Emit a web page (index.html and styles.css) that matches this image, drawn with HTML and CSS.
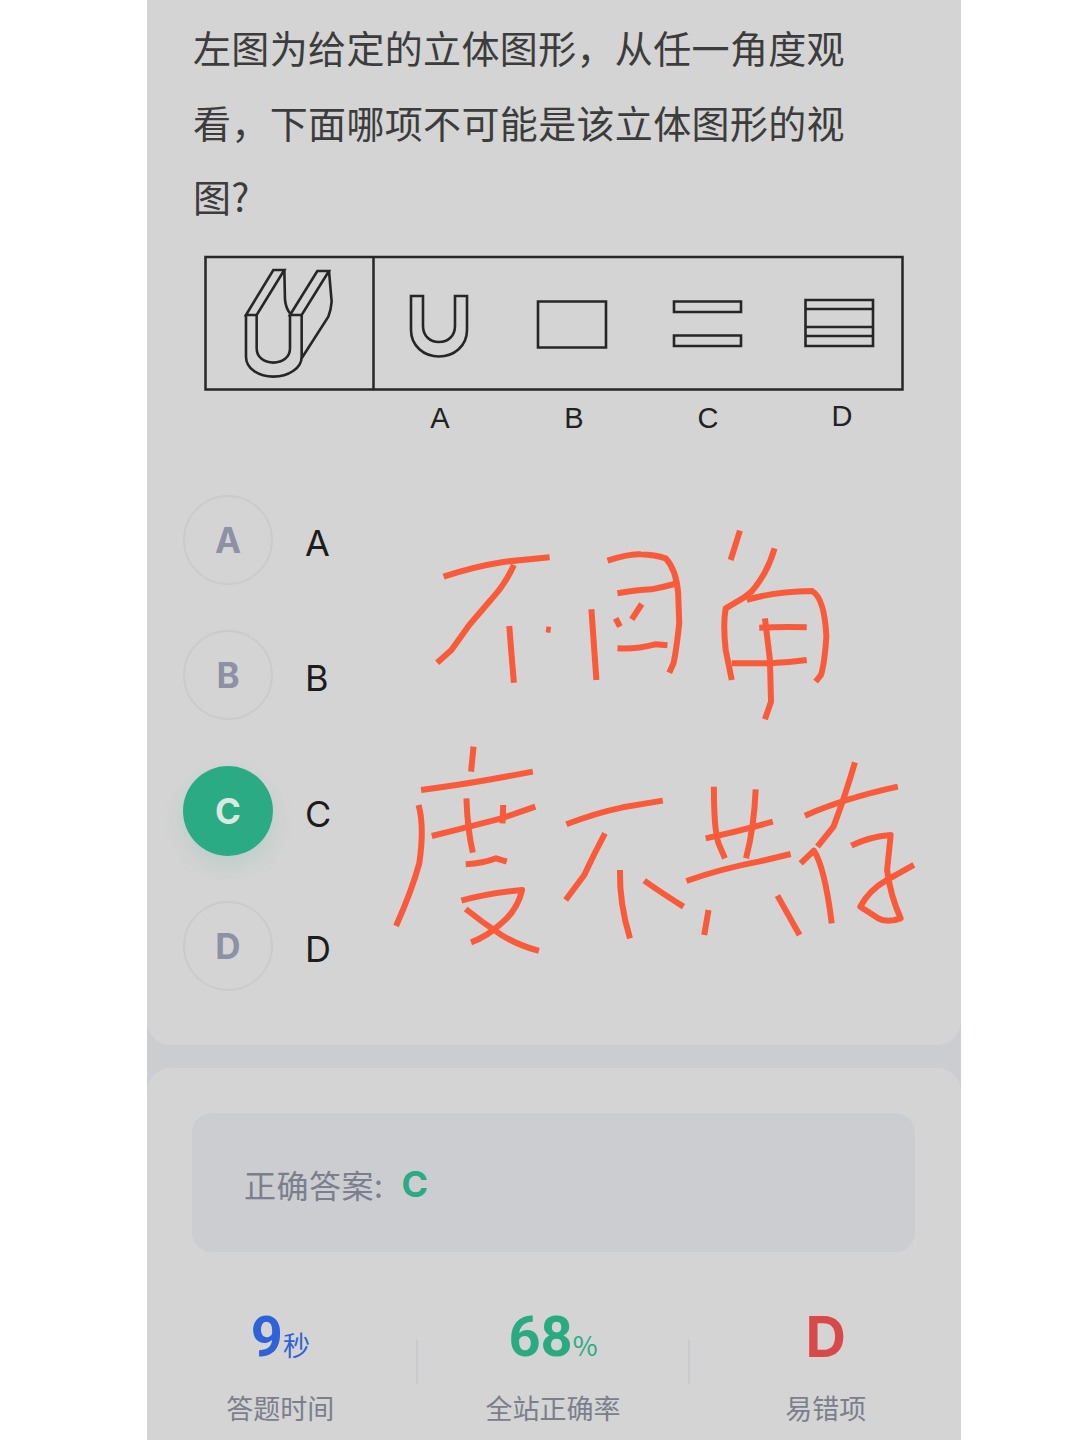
FILE: index.html
```html
<!DOCTYPE html>
<html lang="zh-CN">
<head>
    <meta charset="UTF-8">
    <meta name="viewport" content="width=device-width, initial-scale=1.0">
    <title>Question</title>
    <link rel="stylesheet" href="styles.css">
</head>
<body>
    <div class="app">
        <div class="card question-card">
            <p class="question">左图为给定的立体图形，从任一角度观看，下面哪项不可能是该立体图形的视图?</p>

            <!-- puzzle figure, coordinates match the page -->
            <svg class="figure" viewBox="190 240 730 200" width="730" height="200">
                <g class="fig-line">
                    <rect x="205.500" y="257" width="697" height="132.500"/>
                    <path d="M373.500 257V389.500"/>
                </g>
                <g class="fig-thin" transform="translate(230 260) scale(.3333)">
                    <path d="M48 165V290C48 325 85 350 130 350C175 350 215 325 215 290V165"/>
                    <path d="M80 165V265C80 292 102 308 130 308C158 308 180 292 180 265V165"/>
                    <path d="M48 165L130 30H163L80 165Z"/>
                    <path d="M180 165L262 33H297L215 165Z"/>
                    <path d="M163 30L165 120Q168 145 180 160"/>
                    <path d="M297 33L305 125Q303 150 295 170L215 295"/>
                </g>
                <g class="fig-thin">
                    <path d="M411 296V330C411 346 424 356.500 439 356.500C454 356.500 467 346 467 330V296H455V326C455 336 448 342 439 342C430 342 423 336 423 326V296Z"/>
                    <rect x="538" y="301.500" width="68" height="46"/>
                    <rect x="674" y="301.500" width="67" height="10.500"/>
                    <rect x="674" y="335.500" width="67" height="10.500"/>
                    <rect x="805.500" y="300" width="67.500" height="46"/>
                    <path d="M805.500 309H873M805.500 327H873M805.500 336H873"/>
                </g>
                <text class="fig-label" x="440" y="428">A</text>
                <text class="fig-label" x="574" y="428">B</text>
                <text class="fig-label" x="708" y="428">C</text>
                <text class="fig-label" x="842" y="426">D</text>
            </svg>

            <ul class="options">
                <li class="option"><span class="bubble">A</span><span class="option-text">A</span></li>
                <li class="option"><span class="bubble">B</span><span class="option-text">B</span></li>
                <li class="option"><span class="bubble correct">C</span><span class="option-text">C</span></li>
                <li class="option"><span class="bubble">D</span><span class="option-text">D</span></li>
            </ul>
        </div>

        <div class="card result-card">
            <div class="answer">
                <span class="answer-label">正确答案:</span>
                <span class="answer-value">C</span>
            </div>
            <div class="stats">
                <div class="stat">
                    <div class="stat-num blue">9<small>秒</small></div>
                    <div class="stat-label">答题时间</div>
                </div>
                <div class="stat-sep"></div>
                <div class="stat">
                    <div class="stat-num green">68<small>%</small></div>
                    <div class="stat-label">全站正确率</div>
                </div>
                <div class="stat-sep"></div>
                <div class="stat">
                    <div class="stat-num red">D</div>
                    <div class="stat-label">易错项</div>
                </div>
            </div>
        </div>

        <!-- freehand pen marks on top of the screenshot -->
        <svg class="ink" viewBox="380 510 560 460" width="560" height="460" role="img" aria-label="不同角度不共存">
            <g transform="translate(380 510) scale(.3571 .3333)">
                <path d="M178 200Q260 170 350 155L475 142"/>
                <path d="M375 165Q350 225 310 270L250 345L200 420L160 458"/>
                <path d="M362 348L368 430L375 518"/>
                <path d="M465 358L478 360"/>
                <path d="M592 298L606 510"/>
                <path d="M637 152Q700 130 730 133Q770 135 800 145Q830 180 835 250L838 340Q830 420 822 460L810 488"/>
                <path d="M665 250Q720 240 760 238Q790 232 825 222"/>
                <path d="M660 325L672 350"/>
                <path d="M733 282L705 328"/>
                <path d="M665 415Q720 418 770 403L805 406"/>
                <path d="M1008 62L982 150"/>
                <path d="M1105 115Q1085 190 1040 245L1020 262L968 295Q960 340 968 420L985 510"/>
                <path d="M1027 270Q1100 245 1210 243Q1245 265 1250 380Q1245 460 1235 495L1220 515"/>
                <path d="M1062 353Q1130 350 1195 352"/>
                <path d="M985 460L1090 460Q1140 458 1195 450"/>
                <path d="M1078 325L1092 450L1095 575L1078 628"/>
            </g>
            <g transform="translate(380 730) scale(.3571 .3333)">
                <path d="M262 50L255 125"/>
                <path d="M115 180Q220 165 300 150L428 125"/>
                <path d="M108 225Q125 290 110 400Q90 480 45 588"/>
                <path d="M242 205Q245 300 260 368"/>
                <path d="M345 225L343 280"/>
                <path d="M145 318Q250 290 340 265L435 230"/>
                <path d="M240 403Q290 400 325 385L355 395"/>
                <path d="M228 512Q300 490 398 480Q385 540 340 580Q300 620 255 637"/>
                <path d="M240 537Q290 580 340 615Q385 645 445 663"/>
                <path d="M522 283Q600 250 680 232L792 212"/>
                <path d="M630 310Q600 370 572 435L520 510"/>
                <path d="M672 420Q670 520 700 625"/>
                <path d="M740 452Q790 490 850 530"/>
                <path d="M935 170Q935 300 948 340L966 385"/>
                <path d="M1052 178Q1048 290 1025 385"/>
                <path d="M912 325Q1000 305 1100 275"/>
                <path d="M858 453Q960 415 1060 395L1150 372"/>
                <path d="M920 540L908 615"/>
                <path d="M1113 497L1175 615"/>
                <path d="M1330 97Q1305 190 1270 290L1225 350"/>
                <path d="M1190 257Q1300 205 1450 170"/>
                <path d="M1178 400L1215 362Q1245 410 1265 580"/>
                <path d="M1320 347Q1370 320 1430 315Q1425 370 1420 420Q1430 500 1458 565Q1420 580 1395 565L1345 530Q1370 480 1420 450L1495 405"/>
            </g>
        </svg>
    </div>
</body>
</html>
```

FILE: styles.css
```css
html, body {
    margin: 0;
    height: 1440px;
    overflow: hidden;
    background: #fff;
}
body {
    font-family: "Noto Sans CJK SC", "Noto Sans", sans-serif;
}
.app {
    position: relative;
    width: 814px;
    height: 1440px;
    margin-left: 147px;
    background: #cbcdd1;
    display: flex;
    flex-direction: column;
    gap: 23px;
}
.card {
    background: #d4d4d4;
    border-radius: 24px;
}
.question-card {
    border-radius: 0 0 24px 24px;
    padding: 10px 0 54px;
}
.question {
    margin: 0;
    width: 670px;
    padding-left: 46px;
    font-size: 38px;
    letter-spacing: 0.35px;
    line-height: 74.5px;
    color: #3c3c3c;
}
.figure {
    display: block;
    margin: 6px 0 55px 43px;
}
.fig-line, .fig-thin {
    fill: none;
    stroke: #262626;
    stroke-width: 2.5px;
}
.fig-thin {
    stroke-width: 2.6px;
}
.fig-thin path, .fig-thin rect {
    vector-effect: non-scaling-stroke;
}
.fig-label {
    font-family: "Liberation Sans", sans-serif;
    font-size: 29px;
    fill: #222;
    text-anchor: middle;
}
.options {
    list-style: none;
    margin: 0;
    padding: 0 0 0 36px;
    display: flex;
    flex-direction: column;
    gap: 45.5px;
}
.option {
    display: flex;
    align-items: center;
    gap: 32px;
    height: 90px;
}
.bubble {
    box-sizing: border-box;
    width: 90px;
    height: 90px;
    border: 2px solid #cbcbcd;
    border-radius: 50%;
    display: flex;
    align-items: center;
    justify-content: center;
    font-family: Inter, sans-serif;
    font-weight: 700;
    font-size: 35px;
    color: #8e90a6;
}
.bubble.correct {
    border: none;
    background: #2bab84;
    color: #d9e8e1;
    box-shadow: 0 10px 22px rgba(43, 171, 132, 0.14);
}
.option-text {
    font-family: Inter, sans-serif;
    font-size: 36px;
    color: #1c1c1c;
    padding-top: 6px;
}
.result-card {
    flex: 1;
    border-radius: 24px 24px 0 0;
    padding-top: 45px;
}
.answer {
    box-sizing: border-box;
    width: 723px;
    height: 139px;
    margin-left: 45px;
    padding-left: 52px;
    background: #cbcdd1;
    border-radius: 20px;
    display: flex;
    align-items: center;
    gap: 18px;
}
.answer-label {
    font-size: 32px;
    letter-spacing: 0.5px;
    color: #7b7f8d;
    padding-top: 3px;
}
.answer-value {
    font-family: Inter, sans-serif;
    font-weight: 700;
    font-size: 36px;
    color: #2bab84;
    padding-top: 2px;
}
.stats {
    display: flex;
    margin: 50px 0 0 -2px;
}
.stat {
    flex: 1;
    text-align: center;
}
.stat-sep {
    width: 2px;
    height: 44px;
    margin-top: 38px;
    background: #c8cacf;
}
.stat-num {
    font-family: Roboto, sans-serif;
    font-weight: 700;
    font-size: 56px;
    line-height: 70px;
    height: 70px;
}
.stat-num small {
    font-family: "Noto Sans CJK SC", sans-serif;
    font-weight: 400;
    font-size: 27px;
    line-height: 1;
}
.blue { color: #2f62d6; }
.green { color: #2aaa80; }
.red {
    color: #d84a4a;
    font-family: Inter, sans-serif;
}
.stat-label {
    margin-top: 16px;
    font-size: 27px;
    line-height: 40px;
    color: #7b7f8d;
}
.ink {
    position: absolute;
    left: 233px;
    top: 510px;
    fill: none;
    stroke: #f95a3a;
    stroke-width: 6px;
    stroke-linejoin: round;
}
.ink path {
    vector-effect: non-scaling-stroke;
}
```
